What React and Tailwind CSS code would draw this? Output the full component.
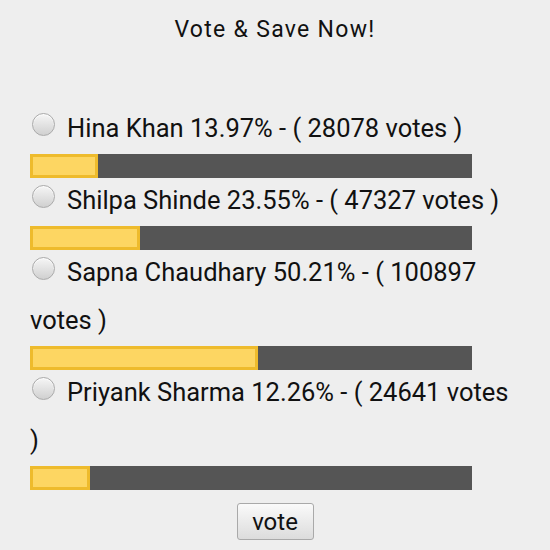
import React, { useState } from 'react';

const candidates = [
  { name: 'Hina Khan', pct: 13.97, votes: 28078 },
  { name: 'Shilpa Shinde', pct: 23.55, votes: 47327 },
  { name: 'Sapna Chaudhary', pct: 50.21, votes: 100897 },
  { name: 'Priyank Sharma', pct: 12.26, votes: 24641 },
];

const PollOption = ({ data, checked, onPick }) => {
  return (
    <div>
      <label className="leading-[48px] cursor-pointer" onClick={onPick}>
        <span
          className={`inline-block w-[23px] h-[23px] ml-[2px] mr-3 align-[1px] rounded-full border border-[#aaaaaa] bg-gradient-to-b from-[#f6f6f6] to-[#d0d0d0] shadow-[inset_0_1px_1px_rgba(255,255,255,0.8)] ${checked ? 'ring-4 ring-inset ring-[#666]' : ''}`}
        />
        {data.name} {data.pct}% - ( {data.votes} votes )
      </label>
      {/* progress bar: grey track with the yellow share on top */}
      <div className="w-[442px] h-6 bg-[#555555] mt-[2px] mb-[-2px]">
        <div
          className="box-content h-[18px] border-[3px] border-[#eebb2c] bg-[#fdd662]"
          style={{ width: `${data.pct}%` }}
        />
      </div>
    </div>
  );
};

const App = () => {
  const [picked, setPicked] = useState(null);

  return (
    <div
      className="min-h-[550px] bg-[#eeeeee] pl-[30px] pr-[35px] pt-[6px] text-[25.5px] text-[#111111]"
      style={{ fontFamily: 'Roboto, "Noto Sans", sans-serif' }}
    >
      <p className="text-center text-[23px] tracking-[1.3px] leading-[48px] pl-[5px]">Vote &amp; Save Now!</p>
      <div className="mt-[50px]">
        {candidates.map((c, i) => (
          <PollOption key={i} data={c} checked={picked === i} onPick={() => setPicked(i)} />
        ))}
      </div>
      <div className="flex justify-center mt-[15px] pl-[5px]">
        <button className="w-[77px] h-[37px] text-[24px] leading-none text-[#111] rounded-[3px] border border-[#a9a9a9] bg-gradient-to-b from-[#fafafa] to-[#dcdcdc]">
          vote
        </button>
      </div>
    </div>
  );
};

export default App;
